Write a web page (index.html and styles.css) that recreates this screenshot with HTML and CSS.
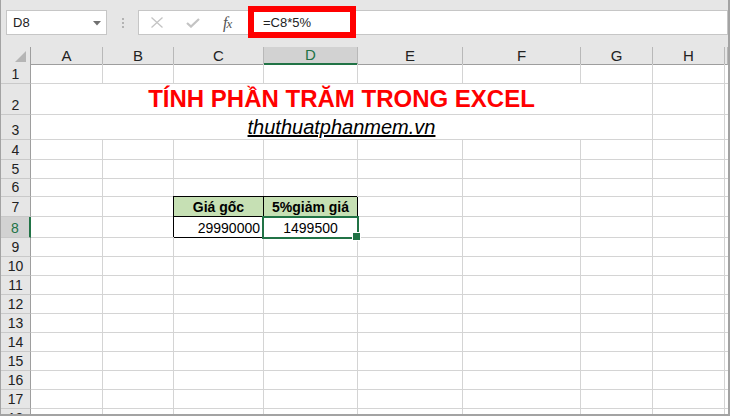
FILE: index.html
```html
<!DOCTYPE html>
<html lang="vi">
<head>
<meta charset="utf-8">
<title>Excel</title>
<link rel="stylesheet" href="styles.css">
</head>
<body>
<div class="app">
  <div class="fbar">
    <div class="namebox"><span>D8</span><svg class="dd" width="8" height="5" viewBox="0 0 8 5"><polygon points="0,0 8,0 4,4.5" fill="#707070"/></svg></div>
    <div class="dots"><svg width="2" height="10" viewBox="0 0 2 10"><rect x="0" y="0" width="2" height="2" fill="#b3b3b3"/><rect x="0" y="4" width="2" height="2" fill="#b3b3b3"/><rect x="0" y="8" width="2" height="2" fill="#b3b3b3"/></svg></div>
    <div class="btns">
      <svg class="ic-x" width="12" height="11" viewBox="0 0 12 11"><path d="M0.5 0.5 L11.5 10.5 M11.5 0.5 L0.5 10.5" stroke="#c4c4c4" stroke-width="1.3" fill="none"/></svg>
      <svg class="ic-ok" width="14" height="10" viewBox="0 0 14 10"><path d="M1 5 L5 8.6 L13 1" stroke="#c4c4c4" stroke-width="2.2" fill="none"/></svg>
      <span class="fx">f<span class="fxx">x</span></span>
    </div>
    <div class="finput">=C8*5%</div>
    <div class="annot"></div>
  </div>
  <div class="sheet">
    <div class="row hdr">
      <div class="ch corner"><svg width="11" height="11" viewBox="0 0 11 11"><polygon points="11,0 11,11 0,11" fill="#b5b5b5"/></svg></div>
      <div class="ch">A</div><div class="ch">B</div><div class="ch">C</div><div class="ch on">D</div><div class="ch">E</div><div class="ch">F</div><div class="ch">G</div><div class="ch">H</div><div class="ch"></div>
    </div>
    <div class="row r20"><div class="c rh">1</div><div class="c"></div><div class="c"></div><div class="c"></div><div class="c"></div><div class="c"></div><div class="c"></div><div class="c"></div><div class="c"></div><div class="c"></div></div>
    <div class="row r31"><div class="c rh">2</div><div class="c merge"><span class="title">TÍNH PHẦN TRĂM TRONG EXCEL</span></div><div class="c"></div><div class="c"></div></div>
    <div class="row r25"><div class="c rh">3</div><div class="c merge"><span class="sub">thuthuatphanmem.vn</span></div><div class="c"></div><div class="c"></div></div>
    <div class="row r20"><div class="c rh">4</div><div class="c"></div><div class="c"></div><div class="c"></div><div class="c"></div><div class="c"></div><div class="c"></div><div class="c"></div><div class="c"></div><div class="c"></div></div>
    <div class="row"><div class="c rh">5</div><div class="c"></div><div class="c"></div><div class="c"></div><div class="c"></div><div class="c"></div><div class="c"></div><div class="c"></div><div class="c"></div><div class="c"></div></div>
    <div class="row r18"><div class="c rh">6</div><div class="c"></div><div class="c"></div><div class="c"></div><div class="c"></div><div class="c"></div><div class="c"></div><div class="c"></div><div class="c"></div><div class="c"></div></div>
    <div class="row r20"><div class="c rh">7</div><div class="c"></div><div class="c"></div><div class="c t th">Giá gốc</div><div class="c t th">5%giảm giá</div><div class="c"></div><div class="c"></div><div class="c"></div><div class="c"></div><div class="c"></div></div>
    <div class="row r21"><div class="c rh on">8</div><div class="c"></div><div class="c"></div><div class="c t num">29990000</div><div class="c t ctr sel">1499500</div><div class="c"></div><div class="c"></div><div class="c"></div><div class="c"></div><div class="c"></div></div>
    <div class="row"><div class="c rh">9</div><div class="c"></div><div class="c"></div><div class="c"></div><div class="c"></div><div class="c"></div><div class="c"></div><div class="c"></div><div class="c"></div><div class="c"></div></div>
    <div class="row"><div class="c rh">10</div><div class="c"></div><div class="c"></div><div class="c"></div><div class="c"></div><div class="c"></div><div class="c"></div><div class="c"></div><div class="c"></div><div class="c"></div></div>
    <div class="row"><div class="c rh">11</div><div class="c"></div><div class="c"></div><div class="c"></div><div class="c"></div><div class="c"></div><div class="c"></div><div class="c"></div><div class="c"></div><div class="c"></div></div>
    <div class="row"><div class="c rh">12</div><div class="c"></div><div class="c"></div><div class="c"></div><div class="c"></div><div class="c"></div><div class="c"></div><div class="c"></div><div class="c"></div><div class="c"></div></div>
    <div class="row"><div class="c rh">13</div><div class="c"></div><div class="c"></div><div class="c"></div><div class="c"></div><div class="c"></div><div class="c"></div><div class="c"></div><div class="c"></div><div class="c"></div></div>
    <div class="row"><div class="c rh">14</div><div class="c"></div><div class="c"></div><div class="c"></div><div class="c"></div><div class="c"></div><div class="c"></div><div class="c"></div><div class="c"></div><div class="c"></div></div>
    <div class="row"><div class="c rh">15</div><div class="c"></div><div class="c"></div><div class="c"></div><div class="c"></div><div class="c"></div><div class="c"></div><div class="c"></div><div class="c"></div><div class="c"></div></div>
    <div class="row"><div class="c rh">16</div><div class="c"></div><div class="c"></div><div class="c"></div><div class="c"></div><div class="c"></div><div class="c"></div><div class="c"></div><div class="c"></div><div class="c"></div></div>
    <div class="row"><div class="c rh">17</div><div class="c"></div><div class="c"></div><div class="c"></div><div class="c"></div><div class="c"></div><div class="c"></div><div class="c"></div><div class="c"></div><div class="c"></div></div>
    <div class="row"><div class="c rh">18</div><div class="c"></div><div class="c"></div><div class="c"></div><div class="c"></div><div class="c"></div><div class="c"></div><div class="c"></div><div class="c"></div><div class="c"></div></div>
  </div>
</div>
</body>
</html>
```
FILE: styles.css
```css
* { box-sizing: border-box; }
html, body { margin: 0; padding: 0; }
body {
  width: 730px;
  height: 416px;
  overflow: hidden;
  background: #ffffff;
  font-family: "Liberation Sans", Arial, sans-serif;
  color: #222222;
}
.app {
  position: relative;
  width: 730px;
  height: 416px;
  display: flex;
  flex-direction: column;
  overflow: hidden;
  background: #e6e6e6;
  border-left: 1px solid #a3a3a3;
  border-right: 2px solid #a3a3a3;
  border-bottom: 2px solid #a3a3a3;
}

/* formula bar */
.fbar {
  flex: none;
  height: 45px;
  padding: 10px 0 10px 5px;
  display: flex;
}
.namebox {
  width: 101px;
  background: #ffffff;
  border: 1px solid #c6c6c6;
  display: flex;
  align-items: center;
  justify-content: space-between;
  padding: 0 5px 0 6px;
  font-size: 13px;
}
.dd { margin-top: 1px; }
.dots {
  width: 31px;
  display: flex;
  align-items: center;
  justify-content: center;
}
.btns {
  width: 110px;
  background: #ffffff;
  border: 1px solid #c6c6c6;
  border-right: none;
  display: flex;
  align-items: center;
  padding-left: 12px;
}
.ic-x { margin-right: 23px; }
.ic-ok { margin-right: 23px; margin-top: 1px; }
.fx {
  font-family: "Liberation Serif", "Times New Roman", serif;
  font-style: italic;
  font-size: 16px;
  color: #555555;
  letter-spacing: -1px;
}
.fxx { font-size: 13px; }
.finput {
  flex: 1;
  background: #ffffff;
  border: 1px solid #c6c6c6;
  display: flex;
  align-items: center;
  padding-left: 14px;
  font-size: 13px;
}
.annot {
  position: absolute;
  left: 247px;
  top: 6px;
  width: 108px;
  height: 32px;
  border: 6px solid #ff0000;
}

/* sheet */
.sheet {
  flex: 1;
  background: #ffffff;
  overflow: hidden;
}
.row {
  display: grid;
  grid-template-columns: 30px 72px 71px 90px 94px 105px 118px 72px 72px 1fr;
  height: 19px;
}
.r18 { height: 18px; }
.r20 { height: 20px; }
.r21 { height: 21px; }
.r25 { height: 25px; }
.r31 { height: 31px; }

.hdr {
  height: 19px;
  padding-top: 2px;
  background: #e6e6e6;
}
.ch {
  background: #e6e6e6;
  border-right: 1px solid #b8b8b8;
  border-bottom: 1px solid #9e9e9e;
  display: flex;
  align-items: center;
  justify-content: center;
  font-size: 15px;
  line-height: 16px;
  color: #222222;
}
.ch.corner {
  border-right-color: #9e9e9e;
  justify-content: flex-end;
  align-items: flex-end;
  padding: 0 4px 2px 0;
}
.ch.on {
  background: #d2d2d2;
  color: #217346;
  border-bottom: 2px solid #217346;
}

.c {
  border-right: 1px solid #d4d4d4;
  border-bottom: 1px solid #d4d4d4;
  display: flex;
  align-items: flex-end;
  padding: 0 3px 1px;
  font-size: 14px;
  line-height: 16px;
  white-space: nowrap;
  min-width: 0;
}
.rh {
  background: #e6e6e6;
  border-right: 1px solid #9e9e9e;
  border-bottom-color: #c9c9c9;
  justify-content: center;
  padding: 0 0 1px;
}
.rh.on {
  background: #d2d2d2;
  color: #217346;
  border-right: 2px solid #217346;
}

.merge {
  grid-column: span 7;
  justify-content: center;
  overflow: visible;
}
.title {
  color: #ff0000;
  font-weight: bold;
  font-size: 24px;
  line-height: 26px;
  margin-bottom: 1px;
}
.sub {
  font-style: italic;
  text-decoration: underline;
  font-size: 20px;
  line-height: 22px;
  color: #000000;
}

.t {
  border-right-color: #000000;
  border-bottom-color: #000000;
  box-shadow: -1px -1px 0 #000000;
  color: #000000;
}
.th {
  background: #c6e0b4;
  font-weight: bold;
  justify-content: center;
}
.num { justify-content: flex-end; }
.ctr { justify-content: center; }
.sel { position: relative; }
.sel::after {
  content: "";
  position: absolute;
  left: -2px;
  top: -1px;
  right: -2px;
  bottom: -2px;
  border: 2px solid #217346;
}
.sel::before {
  content: "";
  position: absolute;
  right: -4px;
  bottom: -4px;
  width: 7px;
  height: 7px;
  background: #217346;
  border: 1px solid #ffffff;
  z-index: 1;
}
```
